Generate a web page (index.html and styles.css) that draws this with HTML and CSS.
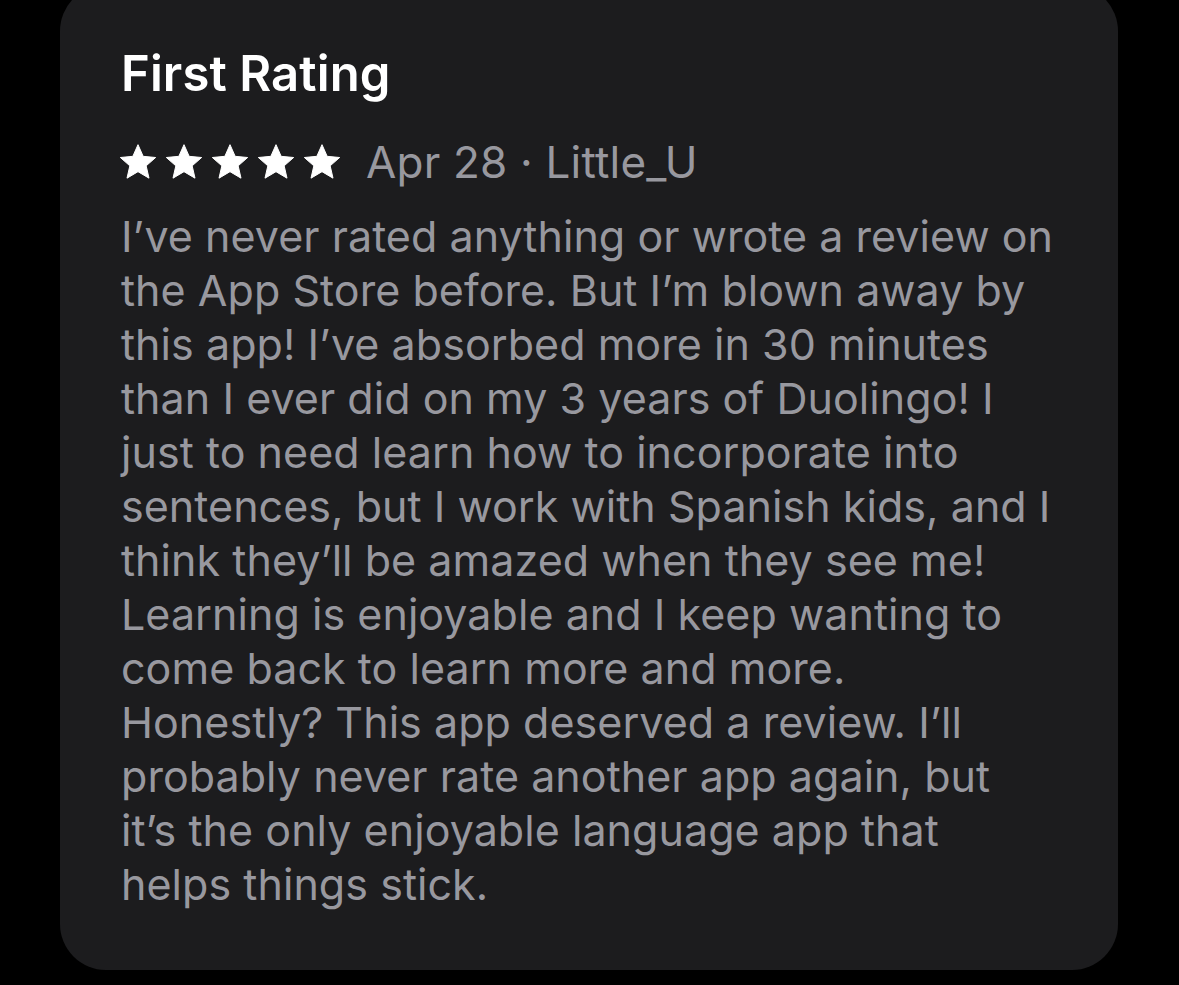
FILE: index.html
```html
<!DOCTYPE html>
<html>
<head>
<meta charset="utf-8">
<link rel="stylesheet" href="styles.css">
</head>
<body>
<div class="card">
  <h1 class="title">First Rating</h1>
  <div class="meta">
    <div class="stars">
      <svg viewBox="0 0 24 24" class="star"><path d="M12 1.6l3.1 7 7.5.7-5.7 5 1.7 7.4L12 17.8l-6.6 3.9 1.7-7.4-5.7-5 7.5-.7z"/></svg>
      <svg viewBox="0 0 24 24" class="star"><path d="M12 1.6l3.1 7 7.5.7-5.7 5 1.7 7.4L12 17.8l-6.6 3.9 1.7-7.4-5.7-5 7.5-.7z"/></svg>
      <svg viewBox="0 0 24 24" class="star"><path d="M12 1.6l3.1 7 7.5.7-5.7 5 1.7 7.4L12 17.8l-6.6 3.9 1.7-7.4-5.7-5 7.5-.7z"/></svg>
      <svg viewBox="0 0 24 24" class="star"><path d="M12 1.6l3.1 7 7.5.7-5.7 5 1.7 7.4L12 17.8l-6.6 3.9 1.7-7.4-5.7-5 7.5-.7z"/></svg>
      <svg viewBox="0 0 24 24" class="star"><path d="M12 1.6l3.1 7 7.5.7-5.7 5 1.7 7.4L12 17.8l-6.6 3.9 1.7-7.4-5.7-5 7.5-.7z"/></svg>
    </div>
    <span class="byline">Apr 28 · Little_U</span>
  </div>
  <p class="review">I’ve never rated anything or wrote a review on<br>the App Store before. But I’m blown away by<br>this app! I’ve absorbed more in 30 minutes<br>than I ever did on my 3 years of Duolingo! I<br>just to need learn how to incorporate into<br>sentences, but I work with Spanish kids, and I<br>think they’ll be amazed when they see me!<br>Learning is enjoyable and I keep wanting to<br>come back to learn more and more.<br>Honestly? This app deserved a review. I’ll<br>probably never rate another app again, but<br>it’s the only enjoyable language app that<br>helps things stick.</p>
</div>
</body>
</html>
```
FILE: styles.css
```css
html, body {
  margin: 0;
  padding: 0;
  background: #000;
  height: 985px;
  overflow: hidden;
}
body {
  font-family: Inter, "Noto Sans", "Liberation Sans", sans-serif;
}
.card {
  margin: -15px 0 0 60px;
  width: 1058px;
  height: 985px;
  box-sizing: border-box;
  background: #1c1c1e;
  border-radius: 46px;
  padding: 60px 61px 0 61px;
}
.title {
  margin: 0;
  color: #fff;
  font-size: 49px;
  font-weight: 600;
  line-height: 58px;
  letter-spacing: 0.1px;
}
.meta {
  display: flex;
  align-items: center;
  margin-top: 34px;
  height: 50px;
}
.stars {
  display: flex;
  gap: 6px;
  margin-left: -3px;
}
.star {
  width: 40px;
  height: 40px;
  fill: #fff;
  stroke: #fff;
  stroke-width: 0.6;
  stroke-linejoin: round;
}
.byline {
  margin-left: 24px;
  color: #98989f;
  font-size: 44px;
  letter-spacing: 0.2px;
}
.review {
  margin: 22px 0 0;
  color: #98989f;
  font-size: 43px;
  line-height: 54px;
  letter-spacing: 0.05px;
  white-space: nowrap;
}
```
